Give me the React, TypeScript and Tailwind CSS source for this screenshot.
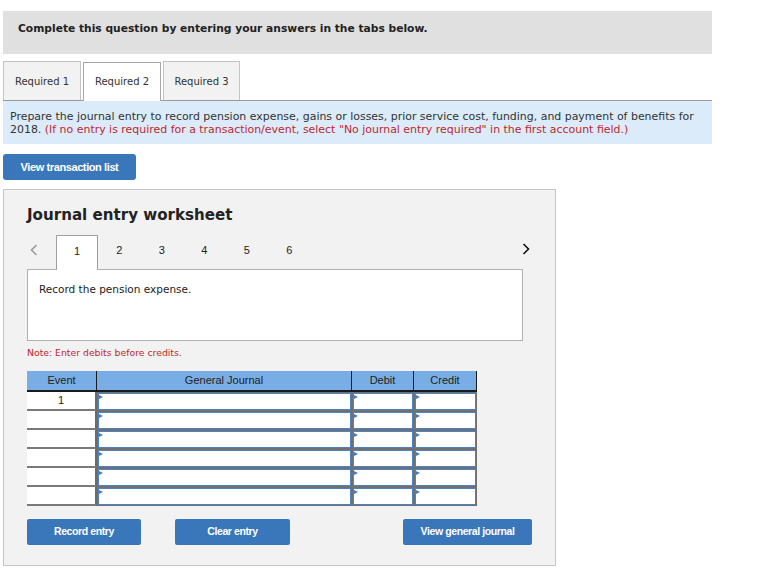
import React from "react";

const verdana = { fontFamily: '"DejaVu Sans", Verdana, sans-serif' };
const arial = { fontFamily: '"Liberation Sans", Arial, sans-serif' };

function Tri() {
  return (
    <div className="absolute left-0 top-[1px] w-0 h-0 border-y-[2px] border-y-transparent border-l-[4px] border-l-[#3f7bc4]" />
  );
}

function InputCell() {
  return (
    <div className="h-full border border-[#707070] bg-[#707070]">
      <div className="relative h-full bg-white border border-[#4f82c3]">
        <Tri />
      </div>
    </div>
  );
}

export default function App() {
  const rows = ["1", "", "", "", "", ""];
  return (
    <div className="w-[764px] h-[584px] bg-white pl-[3px] pt-[11px]" style={verdana}>
      <div className="w-[709px] h-[43px] bg-[#e0e0e0] pl-[15px] pt-[11px] text-[10.7px] leading-[14px] font-bold text-[#222]">
        Complete this question by entering your answers in the tabs below.
      </div>

      <div className="mt-[7px] flex h-[39px] items-end">
        <div className="w-[78px] h-[39px] bg-[#f2f2f2] border border-b-0 border-[#c4c4c4] flex items-center justify-center text-[10px] text-[#333]">
          Required 1
        </div>
        <div className="ml-[2px] w-[78px] h-[39px] bg-white border border-b-0 border-[#a8a8a8] flex items-center justify-center text-[10px] text-[#333] relative z-10 -mb-[1px] pb-[1px]">
          Required 2
        </div>
        <div className="ml-[2px] w-[77px] h-[39px] bg-[#f2f2f2] border border-b-0 border-[#c4c4c4] flex items-center justify-center text-[10px] text-[#333]">
          Required 3
        </div>
      </div>

      <div className="w-[709px] h-[44px] bg-[#dbebf9] border-t border-[#9a9a9a] pl-[7px] pt-[9px] text-[10.95px] leading-[13px] text-[#333]">
        <div>
          Prepare the journal entry to record pension expense, gains or losses, prior service cost, funding, and payment of benefits for
        </div>
        <div>
          2018. <span className="text-[#c0272d]">(If no entry is required for a transaction/event, select "No journal entry required" in the first account field.)</span>
        </div>
      </div>

      <div
        className="mt-[10px] w-[133px] h-[26px] bg-[#3a77ba] rounded-[3px] flex items-center justify-center text-white text-[11px] font-bold tracking-[-0.4px]"
        style={arial}
      >
        View transaction list
      </div>

      <div className="mt-[9px] w-[553px] h-[377px] bg-[#f2f2f2] border border-[#c6c6c6] pl-[23px] pt-[15px]">
        <div className="text-[15.1px] font-bold text-[#222] leading-[20px]">Journal entry worksheet</div>

        <div className="mt-[10px] flex items-end h-[34px] relative">
          <div className="w-[29px] h-[34px] flex items-center justify-start pl-[3px] pb-[4px]">
            <svg width="8" height="12" viewBox="0 0 8 12">
              <path d="M6.5 1 L1.5 6 L6.5 11" stroke="#9a9a9a" strokeWidth="1.6" fill="none" />
            </svg>
          </div>
          <div className="w-[42px] h-[35px] bg-white border border-b-0 border-[#a0a0a0] flex items-center justify-center text-[11px] text-[#222] relative z-10 -mb-[1px] pb-[3px]" style={arial}>
            1
          </div>
          {["2", "3", "4", "5", "6"].map((n) => (
            <div
              key={n}
              className="w-[42.5px] h-[34px] flex items-center justify-center text-[11px] text-[#222] pb-[3px]"
              style={arial}
            >
              {n}
            </div>
          ))}
          <div className="absolute left-[495px] top-[8px]">
            <svg width="8" height="12" viewBox="0 0 8 12">
              <path d="M1.5 1 L6.5 6 L1.5 11" stroke="#111" strokeWidth="1.6" fill="none" />
            </svg>
          </div>
        </div>

        <div className="w-[496px] h-[72px] bg-white border border-[#b0b0b0] pl-[11px] pt-[12px] text-[10.5px] text-[#222]">
          Record the pension expense.
        </div>

        <div className="mt-[6px] text-[9.3px] text-[#c0272d] leading-[12px]">Note: Enter debits before credits.</div>

        <div className="mt-[12px] w-[450px]" style={arial}>
          <div className="grid grid-cols-[70px_255px_62px_63px] h-[21px] bg-[#79ade5] border-b-2 border-[#1a1a1a] text-[11px] text-[#222]">
            <div className="flex items-center justify-center border-r border-[#1a1a1a]">Event</div>
            <div className="flex items-center justify-center border-r border-[#1a1a1a]">General Journal</div>
            <div className="flex items-center justify-center border-r border-[#1a1a1a]">Debit</div>
            <div className="flex items-center justify-center border-r border-[#1a1a1a]">Credit</div>
          </div>
          {rows.map((r, i) => (
            <div key={i} className="grid grid-cols-[70px_255px_62px_63px] h-[19px]">
              <div className="bg-white border-b-2 border-[#7a7a7a] border-r-2 border-r-[#6a6a6a] flex items-center justify-center text-[11px] text-[#222]">
                {r}
              </div>
              <InputCell />
              <InputCell />
              <InputCell />
            </div>
          ))}
        </div>

        <div className="mt-[13px] flex text-white text-[10.5px] font-bold tracking-[-0.4px]" style={arial}>
          <div className="w-[114px] h-[26px] bg-[#3a77ba] rounded-[2px] flex items-center justify-center">Record entry</div>
          <div className="ml-[34px] w-[115px] h-[26px] bg-[#3a77ba] rounded-[2px] flex items-center justify-center">Clear entry</div>
          <div className="ml-[113px] w-[129px] h-[26px] bg-[#3a77ba] rounded-[2px] flex items-center justify-center">View general journal</div>
        </div>
      </div>
    </div>
  );
}
